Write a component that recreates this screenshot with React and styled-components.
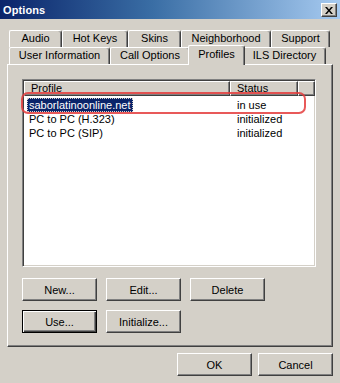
import styled, { createGlobalStyle } from 'styled-components'

const GlobalStyle = createGlobalStyle`
  html, body {
    margin: 0;
    padding: 0;
    background: #d4d0c8;
  }
  * {
    box-sizing: border-box;
  }
`

const Window = styled.div`
  width: 340px;
  height: 383px;
  background: #d4d0c8;
  font-family: "Liberation Sans", Arial, sans-serif;
  font-size: 11px;
  color: #000;
  overflow: hidden;
  display: flex;
  flex-direction: column;
`

const TitleBar = styled.div`
  height: 19px;
  background: linear-gradient(to right, #0a246a 0%, #3a6ea5 45%, #a6caf0 100%);
  display: flex;
  align-items: center;
  justify-content: space-between;
  padding: 0 3px 0 3px;
`

const Title = styled.span`
  color: #fff;
  font-weight: bold;
  font-size: 11px;
  letter-spacing: 0.1px;
`

const CloseButton = styled.div`
  width: 16px;
  height: 14px;
  background: #d4d0c8;
  border-top: 1px solid #fff;
  border-left: 1px solid #fff;
  border-right: 1px solid #404040;
  border-bottom: 1px solid #404040;
  box-shadow: inset -1px -1px 0 #808080;
  display: flex;
  align-items: center;
  justify-content: center;
  margin-top: 1px;
`

const Body = styled.div`
  flex: 1;
  padding: 11px 7px 0 7px;
  display: flex;
  flex-direction: column;
`

const TabStrip = styled.div`
  display: flex;
  flex-direction: column;
  padding-left: 2px;
`

const TabRow = styled.div`
  display: flex;
  height: 17px;
  align-items: flex-end;
`

const Tab = styled.div`
  width: ${(p) => p.$w}px;
  height: ${(p) => (p.$active ? 20 : 17)}px;
  margin: ${(p) => (p.$active ? '0 -2px -1px -2px' : '0')};
  position: relative;
  z-index: ${(p) => (p.$active ? 2 : 1)};
  background: #d4d0c8;
  border-top: 1px solid #fff;
  border-left: 1px solid #fff;
  border-right: 1px solid #404040;
  border-radius: 2px 3px 0 0;
  box-shadow: inset -1px 0 0 #808080;
  display: flex;
  justify-content: center;
  padding-top: ${(p) => (p.$active ? 2 : 1)}px;
  white-space: nowrap;
`

const Panel = styled.div`
  height: 283px;
  border-top: 1px solid #fff;
  border-left: 1px solid #fff;
  border-right: 1px solid #404040;
  border-bottom: 1px solid #404040;
  box-shadow: inset -1px -1px 0 #808080;
  padding: 14px 16px 0 14px;
  display: flex;
  flex-direction: column;
`

const ListWrap = styled.div`
  position: relative;
`

const ListView = styled.div`
  height: 188px;
  background: #fff;
  border-top: 1px solid #808080;
  border-left: 1px solid #808080;
  border-right: 1px solid #fff;
  border-bottom: 1px solid #fff;
  box-shadow: inset 1px 1px 0 #404040, inset -1px -1px 0 #d4d0c8;
  padding: 1px 0 0 1px;
  display: flex;
  flex-direction: column;
`

const Header = styled.div`
  display: flex;
  height: 15px;
  flex-shrink: 0;
`

const HeaderCell = styled.div`
  width: ${(p) => p.$w}px;
  flex: ${(p) => (p.$fill ? 1 : 'none')};
  height: 15px;
  background: #d4d0c8;
  border-top: 1px solid #fff;
  border-left: 1px solid #fff;
  border-right: 1px solid #404040;
  border-bottom: 1px solid #404040;
  box-shadow: inset -1px -1px 0 #808080;
  padding: 0 0 0 6px;
  line-height: 13px;
  white-space: nowrap;
`

const Rows = styled.div`
  padding-top: 2px;
  display: flex;
  flex-direction: column;
`

const Row = styled.div`
  display: flex;
  height: 14px;
  line-height: 14px;
`

const NameCell = styled.div`
  width: 206px;
  padding-left: 3px;
`

const NameText = styled.span`
  display: inline-block;
  padding: 0 2px;
  background: ${(p) => (p.$selected ? '#0a246a' : 'transparent')};
  color: ${(p) => (p.$selected ? '#fff' : '#000')};
  outline: ${(p) => (p.$selected ? '1px dotted #d4d0c8' : 'none')};
  outline-offset: -1px;
`

const StatusCell = styled.div`
  padding-left: 7px;
`

const Highlight = styled.div`
  position: absolute;
  left: -1px;
  top: 13px;
  width: 285px;
  height: 22px;
  border: 2px solid rgba(228, 60, 60, 0.85);
  border-radius: 7px;
  pointer-events: none;
`

const ButtonGrid = styled.div`
  display: grid;
  grid-template-columns: repeat(3, 75px);
  grid-auto-rows: 23px;
  column-gap: 9px;
  row-gap: 9px;
  margin-top: 11px;
`

const Button = styled.div`
  width: 75px;
  height: 23px;
  background: #d4d0c8;
  border: 1px solid ${(p) => (p.$default ? '#000' : 'transparent')};
  box-shadow: ${(p) =>
    p.$default
      ? 'inset 1px 1px 0 #fff, inset -1px -1px 0 #404040, inset -2px -2px 0 #808080'
      : 'inset 1px 1px 0 #fff, inset -1px -1px 0 #404040, inset -2px -2px 0 #808080'};
  display: flex;
  align-items: center;
  justify-content: center;
  ${(p) =>
    !p.$default &&
    `
    border: none;
    border-top: 1px solid #fff;
    border-left: 1px solid #fff;
    border-right: 1px solid #404040;
    border-bottom: 1px solid #404040;
    box-shadow: inset -1px -1px 0 #808080;
  `}
`

const Footer = styled.div`
  display: flex;
  justify-content: flex-end;
  gap: 6px;
  padding: 6px 0 0 0;
`

const CloseIcon = () => (
  <svg width="8" height="7" viewBox="0 0 8 7">
    <path d="M0 0h2l2 2.5L6 0h2L5 3.5 8 7H6L4 4.5 2 7H0l3-3.5z" fill="#000" />
  </svg>
)

const row1 = [
  ['Audio', 53],
  ['Hot Keys', 66],
  ['Skins', 53],
  ['Neighborhood', 90],
  ['Support', 59],
]

const row2 = [
  ['User Information', 101],
  ['Call Options', 80],
  ['Profiles', 57, true],
  ['ILS Directory', 83],
]

const profiles = [
  { name: 'saborlatinoonline.net', status: 'in use', selected: true },
  { name: 'PC to PC (H.323)', status: 'initialized' },
  { name: 'PC to PC (SIP)', status: 'initialized' },
]

export default function App() {
  return (
    <Window>
      <GlobalStyle />
      <TitleBar>
        <Title>Options</Title>
        <CloseButton>
          <CloseIcon />
        </CloseButton>
      </TitleBar>
      <Body>
        <TabStrip>
          <TabRow>
            {row1.map(([label, w]) => (
              <Tab key={label} $w={w}>{label}</Tab>
            ))}
          </TabRow>
          <TabRow>
            {row2.map(([label, w, active]) => (
              <Tab key={label} $w={w} $active={active}>{label}</Tab>
            ))}
          </TabRow>
        </TabStrip>
        <Panel>
          <ListWrap>
            <ListView>
              <Header>
                <HeaderCell $w={206}>Profile</HeaderCell>
                <HeaderCell $w={68}>Status</HeaderCell>
                <HeaderCell $fill />
              </Header>
              <Rows>
                {profiles.map((p) => (
                  <Row key={p.name}>
                    <NameCell>
                      <NameText $selected={p.selected}>{p.name}</NameText>
                    </NameCell>
                    <StatusCell>{p.status}</StatusCell>
                  </Row>
                ))}
              </Rows>
            </ListView>
            <Highlight />
          </ListWrap>
          <ButtonGrid>
            <Button>New...</Button>
            <Button>Edit...</Button>
            <Button>Delete</Button>
            <Button $default>Use...</Button>
            <Button>Initialize...</Button>
          </ButtonGrid>
        </Panel>
        <Footer>
          <Button>OK</Button>
          <Button>Cancel</Button>
        </Footer>
      </Body>
    </Window>
  )
}
